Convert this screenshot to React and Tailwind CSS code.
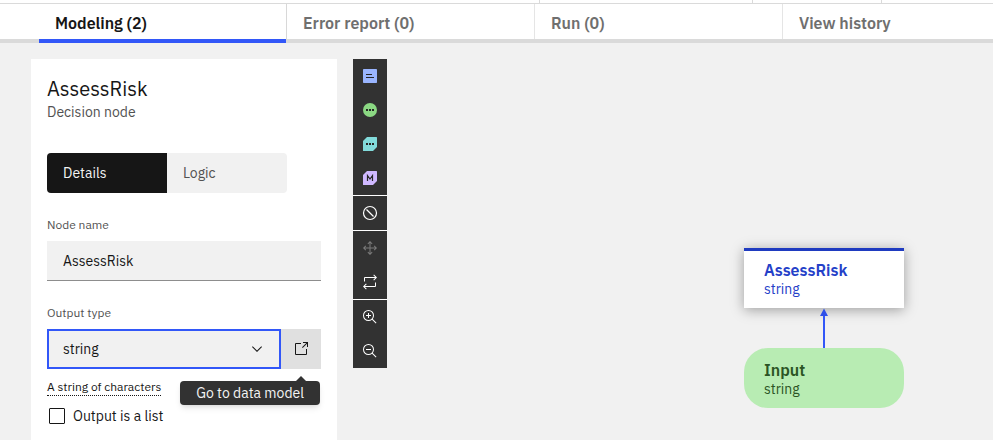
import React from "react";

const tabs = [
  { label: "Error report (0)", line: "border-[#d8d8d8]" },
  { label: "Run (0)", line: "border-[#e5e5e5]" },
  { label: "View history", line: "border-[#e5e5e5]" },
];

function Tabs() {
  return (
    <nav className="flex h-[39px] shrink-0 overflow-hidden bg-white text-base font-semibold leading-8">
      <div className="w-[39px] shrink-0 border-b-4 border-[#dadada]" />
      <button className="w-[247px] shrink-0 border-b-4 border-[#3257f8] pl-4 pt-0.5 text-left text-[#161616]">
        Modeling (2)
      </button>
      {tabs.map((t) => (
        <div key={t.label} className="flex w-[248px] shrink-0 border-b-4 border-[#dadada] last:grow">
          <button className={`flex-1 border-l pl-4 pt-0.5 text-left text-[#6f6f6f] ${t.line}`}>{t.label}</button>
        </div>
      ))}
    </nav>
  );
}

function Icon({ children }) {
  return (
    <svg width="16" height="16" viewBox="0 0 32 32" fill="currentColor" aria-hidden="true">
      {children}
    </svg>
  );
}

const glass =
  "M21.4479,20A10.856,10.856,0,0,0,24,13,11,11,0,1,0,13,24a10.856,10.856,0,0,0,7-2.5521L27.5859,29,29,27.5859ZM13,22a9,9,0,1,1,9-9A9.01,9.01,0,0,1,13,22Z";

function Tool({ label, disabled, children }) {
  return (
    <button aria-label={label} disabled={disabled} className="flex h-[34px] w-[34px] items-center justify-center text-white disabled:text-[#7a7a7a]">
      {children}
    </button>
  );
}

function Toolbar() {
  return (
    <div className="w-[34px] shrink-0 divide-y divide-white self-start bg-[#323232]">
      <div>
        <Tool label="Add decision node">
          <svg width="14" height="14" viewBox="0 0 14 14">
            <rect width="14" height="14" rx="0.7" fill="#9ab5ff" />
            <path d="M3 5.5h6M3 8.5h8" stroke="#262626" />
          </svg>
        </Tool>
        <Tool label="Add input node">
          <svg width="14" height="14" viewBox="0 0 14 14">
            <circle cx="7" cy="7" r="7" fill="#8bd883" />
            <path d="M3 6h2v2H3zM6 6h2v2H6zM9 6h2v2H9z" fill="#262626" />
          </svg>
        </Tool>
        <Tool label="Add function node">
          <svg width="14" height="14" viewBox="0 0 14 14">
            <path d="M4 0H13.5Q14 0 14 .5V10L10 14H.5Q0 14 0 13.5V4Z" fill="#82dbdb" />
            <path d="M3 6h2v2H3zM6 6h2v2H6zM9 6h2v2H9z" fill="#262626" />
          </svg>
        </Tool>
        <Tool label="Add predictive model">
          <svg width="14" height="14" viewBox="0 0 14 14">
            <path d="M4 0H13.5Q14 0 14 .5V10L10 14H.5Q0 14 0 13.5V4Z" fill="#cfb8ff" />
            <path d="M4.5 10V4.5L7 8L9.5 4.5V10" fill="none" stroke="#262626" strokeWidth="1.2" />
          </svg>
        </Tool>
      </div>
      <div>
        <Tool label="Delete">
          <svg width="16" height="16" viewBox="0 0 16 16" fill="none" stroke="currentColor" strokeWidth="1.2">
            <circle cx="8" cy="8" r="6.5" />
            <path d="M4.5 4.5L11.5 11.5" />
          </svg>
        </Tool>
      </div>
      <div>
        <Tool label="Move" disabled>
          <Icon>
            <path d="M25 11 23.59 12.41 26.17 15 17 15 17 5.83 19.59 8.41 21 7 16 2 11 7 12.41 8.41 15 5.83 15 15 5.83 15 8.41 12.41 7 11 2 16 7 21 8.41 19.59 5.83 17 15 17 15 26.17 12.41 23.59 11 25 16 30 21 25 19.59 23.59 17 26.17 17 17 26.17 17 23.59 19.59 25 21 30 16Z" />
          </Icon>
        </Tool>
        <Tool label="Auto layout">
          <Icon>
            <path d="M6 6h20.172l-3.586-3.586L24 1l6 6-6 6-1.414-1.414L26.172 8H6v7H4V8a2 2 0 0 1 2-2z" />
            <path d="M9.414 20.414L5.828 24H26v-7h2v7a2 2 0 0 1-2 2H5.828l3.586 3.586L8 31l-6-6 6-6z" />
          </Icon>
        </Tool>
      </div>
      <div>
        <Tool label="Zoom in">
          <Icon>
            <path d="M18 12H14V8H12V12H8V14H12V18H14V14H18Z" />
            <path d={glass} />
          </Icon>
        </Tool>
        <Tool label="Zoom out">
          <Icon>
            <path d="M8 12H18V14H8Z" />
            <path d={glass} />
          </Icon>
        </Tool>
      </div>
    </div>
  );
}

function Panel() {
  return (
    <section className="w-[306px] shrink-0 bg-white px-4 pt-4 text-sm text-[#161616]">
      <h1 className="text-xl leading-7">AssessRisk</h1>
      <p className="leading-[18px] text-[#525252]">Decision node</p>
      <div className="mt-8 flex h-10 w-60 overflow-hidden rounded">
        <button className="flex-1 bg-[#161616] px-4 text-left text-[#f4f4f4]">Details</button>
        <button className="flex-1 bg-[#f1f1f1] px-4 text-left text-[#525252]">Logic</button>
      </div>
      <label htmlFor="node-name" className="mt-6 block text-xs leading-4 text-[#525252]">
        Node name
      </label>
      <input
        id="node-name"
        defaultValue="AssessRisk"
        className="mt-2 block h-10 w-full rounded-none border-b border-[#8d8d8d] bg-[#f1f1f1] px-4 outline-none"
      />
      <label htmlFor="output-type" className="mt-6 block text-xs leading-4 text-[#525252]">
        Output type
      </label>
      <div className="mt-2 flex h-10">
        <div className="relative flex-1">
          <select
            id="output-type"
            className="h-full w-full appearance-none rounded-none border-2 border-[#3257f8] bg-[#f1f1f1] px-3.5 outline-none"
          >
            <option>string</option>
          </select>
          <svg width="16" height="16" viewBox="0 0 16 16" className="pointer-events-none absolute right-4 top-3" aria-hidden="true">
            <path d="M8 11 3 6 3.7 5.3 8 9.6 12.3 5.3 13 6z" fill="#161616" />
          </svg>
        </div>
        <div className="relative">
          <button aria-label="Go to data model" className="flex h-10 w-10 items-center justify-center bg-[#e0e0e0]">
            <Icon>
              <path d="M26 28H6a2 2 0 0 1-2-2V6A2 2 0 0 1 6 4H16V6H6V26H26V16h2V26a2 2 0 0 1-2 2Z" />
              <path d="M20 2V4H26.586L18 12.586 19.414 14 28 5.414V12H30V2Z" />
            </Icon>
          </button>
          <div role="tooltip" className="absolute right-px top-[52px] h-6 whitespace-nowrap rounded-sm bg-[#323232] px-4 leading-6 text-[#f4f4f4] shadow-md">
            <span className="absolute -top-[5px] right-[14px] h-0 w-0 border-x-[5px] border-b-[5px] border-x-transparent border-b-[#323232]" />
            Go to data model
          </div>
        </div>
      </div>
      <div className="mt-2.5 flex text-xs leading-4">
        <span className="border-b border-dotted border-[#161616]">A string of characters</span>
      </div>
      <label className="ml-0.5 mt-3 flex h-4 items-center gap-2 leading-4">
        <input type="checkbox" className="h-4 w-4 appearance-none rounded-[1px] border border-[#161616] bg-white" />
        Output is a list
      </label>
    </section>
  );
}

function Canvas() {
  return (
    <div className="relative flex-1">
      <div className="absolute left-[357px] top-[189px] h-[60px] w-40 border-t-[3px] border-[#1f3bc0] bg-white pl-5 pt-[9px] text-[#2440c8] shadow-[0_2px_12px_rgba(0,0,0,0.35)]">
        <div className="text-base font-semibold leading-5">AssessRisk</div>
        <div className="text-sm leading-[18px]">string</div>
      </div>
      <svg width="10" height="40" viewBox="0 0 10 40" className="absolute left-[432px] top-[249px]" aria-hidden="true">
        <path d="M5 7V40" stroke="#3257f8" strokeWidth="2" />
        <path d="M5 0.5L9 8H1Z" fill="#2f50e8" />
      </svg>
      <div className="absolute left-[357px] top-[289px] h-[60px] w-40 rounded-3xl bg-[#b8ecb3] pl-5 pt-3 text-[#2b5424]">
        <div className="text-base font-semibold leading-5">Input</div>
        <div className="text-sm leading-[18px]">string</div>
      </div>
    </div>
  );
}

export default function App() {
  return (
    <div className="flex h-screen flex-col overflow-hidden bg-[#f1f1f1] font-['IBM_Plex_Sans','Open_Sans',sans-serif]">
      <header className="flex h-1 shrink-0 border-b border-[#dadada] bg-white">
        <div className="ml-[539px] w-[213px] border-l border-[#dadada]" />
        <div className="w-[129px] border-l border-[#dadada]" />
        <div className="border-l border-[#dadada]" />
      </header>
      <Tabs />
      <main className="flex min-h-0 flex-1 pl-[31px] pt-4">
        <Panel />
        <div className="w-4 shrink-0" />
        <Toolbar />
        <Canvas />
      </main>
    </div>
  );
}
